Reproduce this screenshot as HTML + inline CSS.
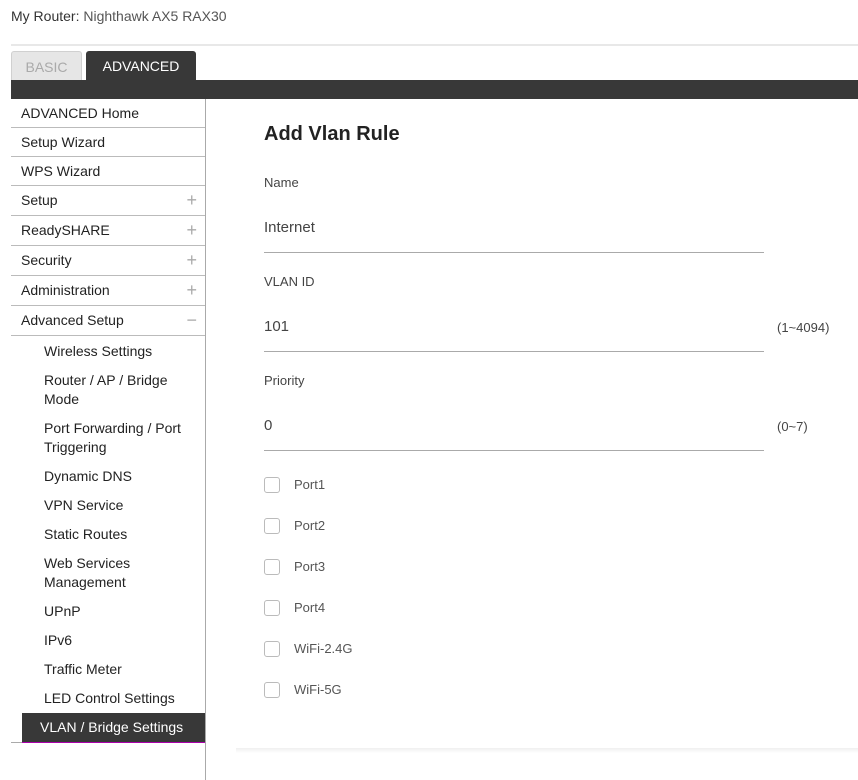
<!DOCTYPE html>
<html><head><style>
*{margin:0;padding:0;box-sizing:border-box}
body{width:858px;height:780px;background:#fff;font-family:"Liberation Sans",sans-serif;color:#333;position:relative;overflow:hidden;font-size:14px}
.a{position:absolute}
.top{left:11px;top:8px;font-size:14px;color:#333}
.top span{color:#555}
.hr{left:11px;top:44px;width:847px;height:2px;background:#e8e8e8}
.tab{top:51px;height:29px;font-size:14px;text-align:center;line-height:30px;border-radius:3px 3px 0 0}
.bar{left:11px;top:80px;width:847px;height:19px;background:#383838}
.side{left:11px;top:99px;width:195px;height:681px;border-right:1px solid #aaa}
.it{position:absolute;left:0;width:194px;border-bottom:1px solid #bbb;padding-left:10px;font-size:14px;color:#222}
.pl{position:absolute;right:8px;top:0;color:#aaa;font-size:18px;font-weight:300}
.sub{position:absolute;left:33px;font-size:14px;color:#222;line-height:19px}
.lbl{left:264px;font-size:13px;color:#444}
.val{left:264px;font-size:15px;color:#444}
.ln{left:264px;width:500px;height:1px;background:#aaa}
.rg{left:777px;font-size:13px;color:#444}
.cb{left:264px;width:16px;height:16px;border:1px solid #bbb;border-radius:3px}
.cl{left:294px;font-size:13px;color:#555}
</style></head><body>
<div class="a top">My Router: <span>Nighthawk AX5 RAX30</span></div>
<div class="a hr"></div>
<div class="a tab" style="left:11px;width:71px;background:#e6e6e6;border:1px solid #d0d0d0;border-bottom:none;color:#aaa">BASIC</div>
<div class="a tab" style="left:86px;width:110px;background:#383838;color:#fff">ADVANCED</div>
<div class="a bar"></div>
<div class="a side">
<div class="it" style="top:0;height:29px;line-height:28px">ADVANCED Home</div>
<div class="it" style="top:29px;height:29px;line-height:28px">Setup Wizard</div>
<div class="it" style="top:58px;height:29px;line-height:28px">WPS Wizard</div>
<div class="it" style="top:87px;height:30px;line-height:28px">Setup<span class="pl">+</span></div>
<div class="it" style="top:117px;height:30px;line-height:28px">ReadySHARE<span class="pl">+</span></div>
<div class="it" style="top:147px;height:30px;line-height:28px">Security<span class="pl">+</span></div>
<div class="it" style="top:177px;height:30px;line-height:28px">Administration<span class="pl">+</span></div>
<div class="it" style="top:207px;height:30px;line-height:28px">Advanced Setup<span class="pl">−</span></div>
<div class="sub" style="top:243px">Wireless Settings</div>
<div class="sub" style="top:272px">Router / AP / Bridge<br>Mode</div>
<div class="sub" style="top:320px">Port Forwarding / Port<br>Triggering</div>
<div class="sub" style="top:368px">Dynamic DNS</div>
<div class="sub" style="top:397px">VPN Service</div>
<div class="sub" style="top:426px">Static Routes</div>
<div class="sub" style="top:455px">Web Services<br>Management</div>
<div class="sub" style="top:503px">UPnP</div>
<div class="sub" style="top:532px">IPv6</div>
<div class="sub" style="top:561px">Traffic Meter</div>
<div class="sub" style="top:590px">LED Control Settings</div>
<div style="position:absolute;left:0;top:643px;width:194px;height:1px;background:#aaa"></div>
<div style="position:absolute;left:11px;top:614px;width:183px;height:30px;background:#383838;color:#fff;border-bottom:1px solid #a0a;padding-left:18px;line-height:28px">VLAN / Bridge Settings</div>
</div>
<div class="a" style="left:264px;top:123px;font-size:20px;font-weight:bold;color:#222">Add Vlan Rule</div>
<div class="a lbl" style="top:175px">Name</div>
<div class="a val" style="top:219px">Internet</div>
<div class="a ln" style="top:252px"></div>
<div class="a lbl" style="top:274px">VLAN ID</div>
<div class="a val" style="top:318px">101</div>
<div class="a ln" style="top:351px"></div>
<div class="a rg" style="top:320px">(1~4094)</div>
<div class="a lbl" style="top:373px">Priority</div>
<div class="a val" style="top:417px">0</div>
<div class="a ln" style="top:450px"></div>
<div class="a rg" style="top:419px">(0~7)</div>
<div class="a cb" style="top:477px"></div><div class="a cl" style="top:477px">Port1</div>
<div class="a cb" style="top:518px"></div><div class="a cl" style="top:518px">Port2</div>
<div class="a cb" style="top:559px"></div><div class="a cl" style="top:559px">Port3</div>
<div class="a cb" style="top:600px"></div><div class="a cl" style="top:600px">Port4</div>
<div class="a cb" style="top:641px"></div><div class="a cl" style="top:641px">WiFi-2.4G</div>
<div class="a cb" style="top:682px"></div><div class="a cl" style="top:682px">WiFi-5G</div>
<div class="a" style="left:236px;top:748px;width:622px;height:5px;background:linear-gradient(#f0f0f0,#fff)"></div>
</body></html>
